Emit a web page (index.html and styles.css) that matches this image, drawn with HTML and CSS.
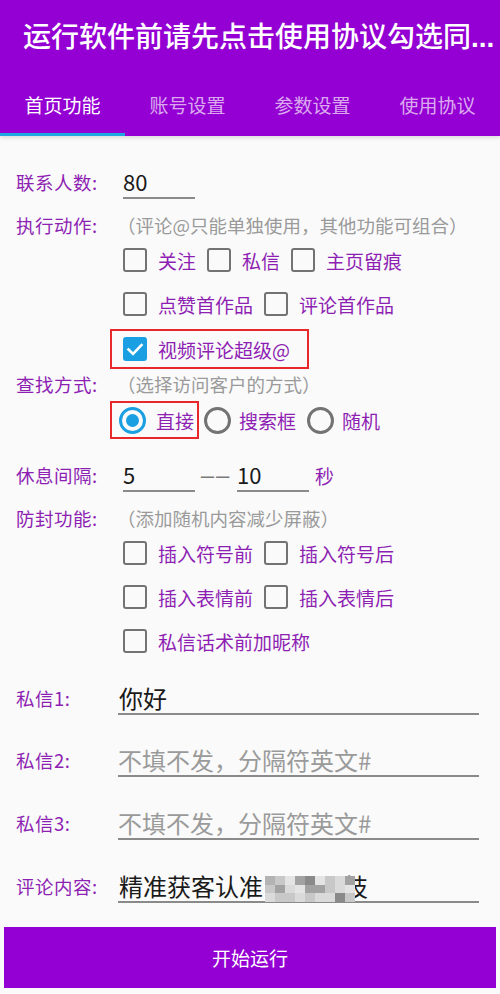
FILE: index.html
```html
<!DOCTYPE html>
<html lang="zh">
<head>
<meta charset="utf-8">
<link rel="stylesheet" href="styles.css">
</head>
<body>
<div class="page">
  <header class="appbar">
    <div class="title">运行软件前请先点击使用协议勾选同<span class="dots">...</span></div>
    <nav class="tabs">
      <div class="tab active">首页功能</div>
      <div class="tab">账号设置</div>
      <div class="tab">参数设置</div>
      <div class="tab">使用协议</div>
    </nav>
    <div class="indicator"></div>
  </header>

  <main class="form">
    <div class="row r-a">
      <div class="label">联系人数:</div>
      <div class="input short"><span class="val">80</span></div>
    </div>

    <div class="row r-b">
      <div class="label">执行动作:</div>
      <div class="hint">（评论@只能单独使用，其他功能可组合）</div>
    </div>

    <div class="row r-c1">
      <div class="label"></div>
      <div class="opts">
        <div class="opt"><span class="cb"></span><span class="otext">关注</span></div>
        <div class="opt"><span class="cb"></span><span class="otext">私信</span></div>
        <div class="opt"><span class="cb"></span><span class="otext">主页留痕</span></div>
      </div>
    </div>

    <div class="row r-c2">
      <div class="label"></div>
      <div class="opts">
        <div class="opt"><span class="cb"></span><span class="otext">点赞首作品</span></div>
        <div class="opt"><span class="cb"></span><span class="otext">评论首作品</span></div>
      </div>
    </div>

    <div class="row r-c3">
      <div class="label"></div>
      <div class="mark mark-cb">
        <div class="opt"><span class="cb checked"><svg viewBox="0 0 24 24" width="24" height="24"><path d="M5.5 12.5l4.5 4.5 8.5-9" fill="none" stroke="#fff" stroke-width="2.6" stroke-linecap="square"/></svg></span><span class="otext">视频评论超级@</span></div>
      </div>
    </div>

    <div class="row r-d">
      <div class="label">查找方式:</div>
      <div class="hint">（选择访问客户的方式）</div>
    </div>

    <div class="row r-r">
      <div class="label"></div>
      <div class="opts">
        <div class="mark mark-rb">
          <div class="opt"><span class="rb on"></span><span class="otext">直接</span></div>
        </div>
        <div class="opt"><span class="rb"></span><span class="otext">搜索框</span></div>
        <div class="opt"><span class="rb"></span><span class="otext">随机</span></div>
      </div>
    </div>

    <div class="row r-e">
      <div class="label">休息间隔:</div>
      <div class="input short"><span class="val">5</span></div>
      <div class="dash">––</div>
      <div class="input short"><span class="val">10</span></div>
      <div class="unit">秒</div>
    </div>

    <div class="row r-f">
      <div class="label">防封功能:</div>
      <div class="hint">（添加随机内容减少屏蔽）</div>
    </div>

    <div class="row r-g1">
      <div class="label"></div>
      <div class="opts">
        <div class="opt"><span class="cb"></span><span class="otext">插入符号前</span></div>
        <div class="opt"><span class="cb"></span><span class="otext">插入符号后</span></div>
      </div>
    </div>

    <div class="row r-g2">
      <div class="label"></div>
      <div class="opts">
        <div class="opt"><span class="cb"></span><span class="otext">插入表情前</span></div>
        <div class="opt"><span class="cb"></span><span class="otext">插入表情后</span></div>
      </div>
    </div>

    <div class="row r-g3">
      <div class="label"></div>
      <div class="opts">
        <div class="opt"><span class="cb"></span><span class="otext">私信话术前加昵称</span></div>
      </div>
    </div>

    <div class="row r-h1">
      <div class="label">私信1:</div>
      <div class="input long"><span class="val big">你好</span></div>
    </div>

    <div class="row r-h2">
      <div class="label">私信2:</div>
      <div class="input long"><span class="ph">不填不发，分隔符英文#</span></div>
    </div>

    <div class="row r-h3">
      <div class="label">私信3:</div>
      <div class="input long"><span class="ph">不填不发，分隔符英文#</span></div>
    </div>

    <div class="row r-h4">
      <div class="label">评论内容:</div>
      <div class="input long"><span class="val big">精准获客认准<span class="pix"><i class="p1"></i><i class="p2"></i><i class="p3"></i><i class="p4"></i><i class="p5"></i><i class="p3"></i><i class="p2"></i><i class="p6"></i><i class="p4"></i><i class="p2"></i><i class="p4"></i><i class="p6"></i><i class="p3"></i><i class="p4"></i><i class="p4"></i><i class="p2"></i><i class="p6"></i><i class="p3"></i><i class="p6"></i><i class="p2"></i><i class="p2"></i><i class="p6"></i><i class="p2"></i><i class="p6"></i><i class="p6"></i><i class="p5"></i><i class="p2"></i></span>技</span></div>
    </div>

    <button class="start">开始运行</button>
  </main>
</div>
</body>
</html>
```

FILE: styles.css
```css
* { box-sizing: border-box; margin: 0; padding: 0; }
html, body { width: 500px; height: 994px; overflow: hidden; }
body {
  background: #fafafa;
  font-family: "Noto Sans CJK SC", "Noto Sans", "DejaVu Sans", sans-serif;
}
.page { width: 500px; height: 994px; display: flex; flex-direction: column; }

.appbar {
  background: #9400d3;
  height: 136px;
  display: flex;
  flex-direction: column;
  box-shadow: 0 2px 4px rgba(0,0,0,0.12);
  position: relative;
}
.title {
  color: #fff;
  font-size: 28px;
  font-weight: 500;
  height: 70px;
  line-height: 70px;
  padding-left: 23px;
  white-space: nowrap;
  letter-spacing: 0;
}
.dots {
  font-family: "Liberation Sans", sans-serif;
  font-weight: 700;
}
.tabs { display: flex; height: 63px; align-items: center; }
.tab {
  flex: 1;
  text-align: center;
  color: rgba(255,255,255,0.68);
  font-size: 19px;
  padding-top: 5px;
}
.tab.active { color: #fff; }
.indicator { width: 125px; height: 3px; background: #1ea6e0; }

.form { display: flex; flex-direction: column; padding-top: 29px; }
.row { display: flex; align-items: center; height: 34px; }
.label {
  width: 123px;
  flex: none;
  padding-left: 16px;
  color: #8e1fb3;
  font-size: 18.5px;
  letter-spacing: 0.5px;
  white-space: nowrap;
}
.hint { color: #9a9a9a; font-size: 18.5px; margin-left: -6px; white-space: nowrap; }

.r-b { margin-top: 9px; }
.r-c1 { margin-top: 1px; }
.r-c2 { margin-top: 10px; }
.r-c3 { margin-top: 11px; }
.r-d { margin-top: 1px; }
.r-r { margin-top: 2px; }
.r-e { margin-top: 21px; }
.r-f { margin-top: 9px; }
.r-g1 { margin-top: 1px; }
.r-g2 { margin-top: 10px; }
.r-g3 { margin-top: 10px; }
.r-h1 { margin-top: 23px; }
.r-h2 { margin-top: 28px; }
.r-h3 { margin-top: 29px; }
.r-h4 { margin-top: 29px; }

.opts { display: flex; align-items: center; gap: 11px; }
.opt { display: flex; align-items: center; gap: 11px; }
.otext { color: #8e1fb3; font-size: 19px; white-space: nowrap; }

.cb {
  width: 24px; height: 24px;
  border: 2.5px solid #737373;
  border-radius: 3px;
  flex: none;
  display: block;
}
.cb.checked { background: #1a9fe2; border-color: #1a9fe2; position: relative; }
.cb.checked svg { position: absolute; left: -2.5px; top: -2.5px; }

.rb {
  width: 27px; height: 27px;
  border: 3px solid #737373;
  border-radius: 50%;
  flex: none;
  display: block;
  margin-left: -2px;
  margin-right: -1px;
  position: relative;
}
.rb.on { border-color: #1a9fe2; }
.rb.on::after {
  content: "";
  position: absolute;
  left: 4px; top: 4px;
  width: 13px; height: 13px;
  border-radius: 50%;
  background: #1a9fe2;
}
.opts > .opt .rb { margin-left: 0; }
.opts > .opt .rb + .otext { margin-left: -2px; }

.mark {
  border: 2px solid #e8282a;
  display: flex;
  align-items: center;
  margin-left: -13px;
  padding-left: 11px;
  flex: none;
}
.mark-cb { width: 199px; height: 40px; }
.mark-rb { width: 89px; height: 38px; padding-left: 9px; margin-right: -6px; }

.input {
  height: 34px;
  border-bottom: 2px solid #8a8a8a;
  display: flex;
  align-items: center;
  flex: none;
}
.input.short { width: 72px; }
.input.long { width: 361px; margin-left: -5px; }
.val { color: #1a1a1a; font-size: 22px; white-space: nowrap; }
.val.big { font-size: 24px; padding-left: 1px; }
.ph { color: #9a9a9a; font-size: 24px; white-space: nowrap; }

.dash {
  color: #7a7a7a;
  font-family: "Liberation Sans", sans-serif;
  font-size: 24px;
  width: 42px;
  text-align: center;
  letter-spacing: 2px;
}
.unit { color: #8e1fb3; font-size: 19px; margin-left: 6px; }

.pix {
  display: inline-grid;
  grid-template-columns: repeat(9, 10px);
  grid-template-rows: repeat(3, 8.4px);
  vertical-align: middle;
  position: relative;
  z-index: 1;
  margin-left: 2px;
  margin-right: -11px;
}
.pix i { display: block; }
.p1 { background: #b3b3b3; }
.p2 { background: #c8c8c8; }
.p3 { background: #e4e4e4; }
.p4 { background: #a2a2a2; }
.p5 { background: #8a8a8a; }
.p6 { background: #dadada; }

.start {
  margin: 24px 4px 0;
  height: 61px;
  background: #9400d3;
  border: none;
  color: #fff;
  font-family: "Noto Sans CJK SC", "Noto Sans", sans-serif;
  font-size: 19px;
}
```
